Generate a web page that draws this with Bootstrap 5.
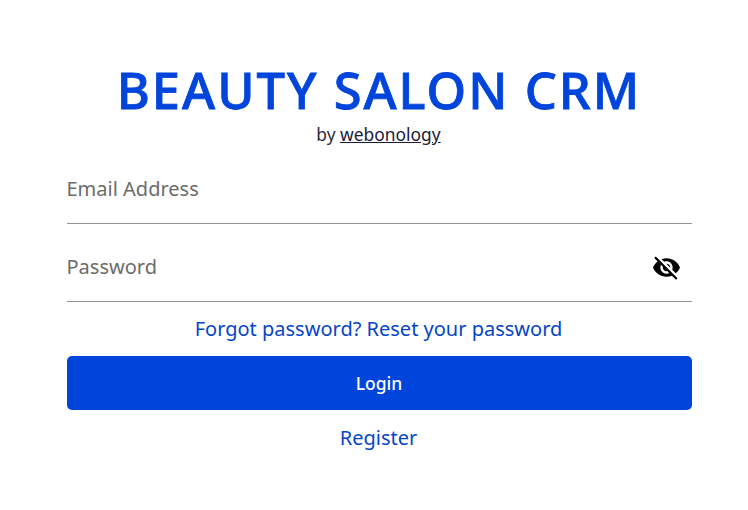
<!DOCTYPE html>
<html lang="en">
<head>
<meta charset="utf-8">
<meta name="viewport" content="width=device-width, initial-scale=1">
<title>Beauty Salon CRM</title>
<link href="https://cdn.jsdelivr.net/npm/bootstrap@5.3.0/dist/css/bootstrap.min.css" rel="stylesheet">
<style>
body{font-family:"Noto Sans",sans-serif;color:#2b2b36;background:#fff;overflow:hidden}
.login-panel{width:625px;margin-left:66.5px;padding-top:57px}
.brand-title{font-size:50.6px;line-height:65px;font-weight:500;letter-spacing:2px;-webkit-text-stroke:.8px #0045db;color:#0045db;white-space:nowrap}
.byline{font-size:17.4px;line-height:24px;padding-right:1px}
.byline a{color:#1a1a3a}
.field-line{height:78px;border-bottom:1px solid #949494;padding-top:8px}
.field-line .form-control{font-size:20px;line-height:28px;padding:0;height:28px;background:transparent}
.field-line .form-control::placeholder{color:#6b6b6b}
.eye-btn{width:27px;height:27px;margin:1px 12px 0 0;color:#000}
.text-action{font-size:20px;line-height:28px;color:#0645c8;padding-right:1px}
.reset-action{padding-top:13px;padding-bottom:13px}
.register-action{padding-top:14px}
.login-btn{height:54px;font-size:17.5px;border-radius:5px;background:#0045db;font-weight:500}
</style>
</head>
<body>
<main class="login-panel text-center">
<h1 class="brand-title mb-0">BEAUTY SALON CRM</h1>
<p class="byline mb-0">by <a href="#">webonology</a></p>
<form>
<div class="field-line d-flex align-items-center"><input type="email" class="form-control border-0 shadow-none" placeholder="Email Address"></div>
<div class="field-line d-flex align-items-center"><input type="password" class="form-control border-0 shadow-none" placeholder="Password">
<button type="button" class="eye-btn btn p-0 border-0 d-flex flex-shrink-0" aria-label="Show password"><svg width="27" height="27" viewBox="1 1 22 22" fill="currentColor"><path d="M12 7c2.760 0 5 2.240 5 5 0 .65-.13 1.260-.36 1.830l2.920 2.920c1.510-1.260 2.700-2.890 3.430-4.750-1.730-4.390-6-7.500-11-7.500-1.400 0-2.740.25-3.980.7l2.160 2.160C10.740 7.130 11.350 7 12 7zM2 4.270l2.280 2.280.46.46C3.080 8.300 1.780 10.020 1 12c1.730 4.390 6 7.500 11 7.500 1.550 0 3.030-.3 4.380-.84l.42.42L19.730 22 21 20.730 3.270 3 2 4.270zM7.530 9.800l1.550 1.550c-.05.21-.08.43-.08.65 0 1.660 1.340 3 3 3 .22 0 .44-.03.65-.08l1.550 1.550c-.67.33-1.410.53-2.200.53-2.760 0-5-2.240-5-5 0-.79.2-1.530.53-2.200zm4.310-.78l3.150 3.150.02-.16c0-1.660-1.340-3-3-3l-.17.01z"/></svg></button></div>
<a class="text-action reset-action d-block text-decoration-none" href="#">Forgot password? Reset your password</a>
<button class="login-btn btn btn-primary w-100 border-0 d-block" type="button">Login</button>
<a class="text-action register-action d-block text-decoration-none" href="#">Register</a>
</form>
</main>
<script src="https://cdn.jsdelivr.net/npm/bootstrap@5.3.0/dist/js/bootstrap.bundle.min.js"></script>
</body>
</html>
